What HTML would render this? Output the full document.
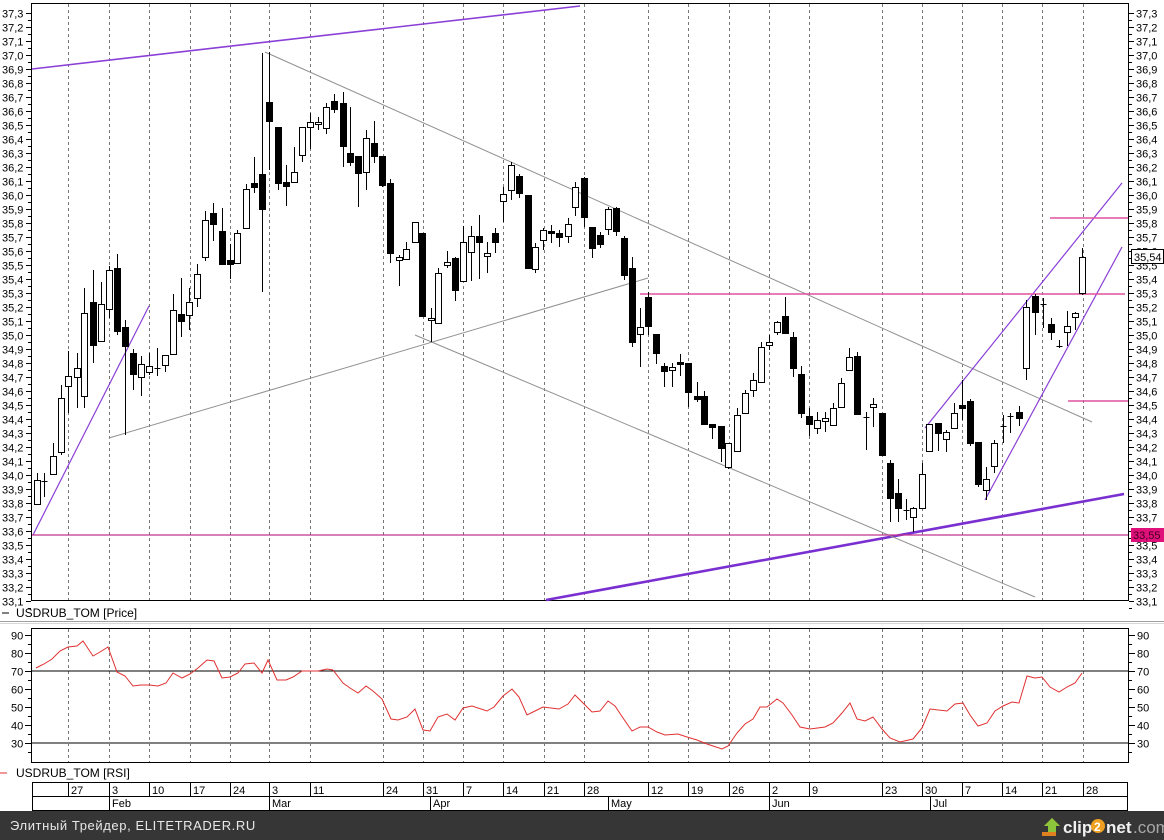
<!DOCTYPE html>
<html><head><meta charset="utf-8"><style>
html,body{margin:0;padding:0;background:#fff;width:1164px;height:840px;overflow:hidden}
svg{display:block}
text{font-family:"Liberation Sans",sans-serif;font-size:11px;fill:#000}
</style></head><body>
<svg id="s" width="1164" height="840" xmlns="http://www.w3.org/2000/svg">
<rect width="1164" height="840" fill="#fff"/>
<g id="grid"></g>
<rect x="31.5" y="3.5" width="1097" height="597" fill="none" stroke="#000"/>
<rect x="31.5" y="628.5" width="1097" height="134" fill="none" stroke="#000"/>
<line x1="32" y1="671" x2="1128" y2="671" stroke="#000"/>
<line x1="32" y1="743" x2="1128" y2="743" stroke="#808080" stroke-width="2"/>
<line x1="0" y1="621.5" x2="1164" y2="621.5" stroke="#a0a0a0"/>
<line x1="0" y1="623.5" x2="1164" y2="623.5" stroke="#d8d8d8"/>
<line x1="32" y1="69" x2="580" y2="6" stroke="#8a3fd6" stroke-width="1.6"/>
<line x1="546" y1="600" x2="1124" y2="494" stroke="#7a2fd0" stroke-width="2.6"/>
<line x1="265" y1="52" x2="1092" y2="422" stroke="#909090"/>
<line x1="415" y1="335" x2="1035" y2="597" stroke="#909090"/>
<line x1="109" y1="438" x2="648" y2="278" stroke="#909090"/>
<line x1="33" y1="535" x2="149" y2="306" stroke="#8a3fd6" stroke-width="1.2"/>
<line x1="925" y1="428" x2="1122" y2="183" stroke="#8a3fd6" stroke-width="1.2"/>
<line x1="985" y1="500" x2="1122" y2="247" stroke="#8a3fd6" stroke-width="1.2"/>
<line x1="32" y1="535" x2="1128" y2="535" stroke="#c0308f" stroke-width="1.2"/>
<line x1="640" y1="294" x2="1125" y2="294" stroke="#e0509f" stroke-width="1.5"/>
<line x1="1050" y1="218" x2="1128" y2="218" stroke="#e0509f" stroke-width="1.5"/>
<line x1="1068" y1="401" x2="1128" y2="401" stroke="#e0509f" stroke-width="1.5"/>
<g id="candles"></g>
<polyline id="rsi" fill="none" stroke="#e03030" stroke-width="1" points=""/>
<g id="axes"></g>
<rect x="1131" y="528" width="33" height="14" fill="#e0107a"/>
<text x="1133" y="539" style="fill:#400020">33,55</text>
<rect x="1131.5" y="249.5" width="32" height="14" fill="#fff" stroke="#000"/>
<text x="1134" y="261">35,54</text>
<line x1="2" y1="613" x2="9" y2="613" stroke="#000"/>
<text x="16" y="617" style="font-size:12px">USDRUB_TOM [Price]</text>
<line x1="0" y1="773" x2="7" y2="773" stroke="#e03030"/>
<text x="16" y="777" style="font-size:12px">USDRUB_TOM [RSI]</text>
<rect x="32.5" y="782.5" width="1095" height="28" fill="#fff" stroke="#000"/>
<line x1="32" y1="796.5" x2="1128" y2="796.5" stroke="#000"/>
<g id="dates"></g>
<rect x="0" y="811" width="1164" height="29" fill="#363636"/>
<text x="10" y="830" style="font-size:13px;fill:#e8e8e8;letter-spacing:0.6px">Элитный Трейдер, ELITETRADER.RU</text>
<g transform="translate(1040,816)">
<polygon points="2,16 8,16 8,10 4,10 12,2 20,10 16,10 16,20 2,20" fill="#e08020"/>
<polygon points="8,16 8,10 4,10 12,2 20,10 16,10 16,16" fill="#8cc43c"/>
</g>
<text x="1063" y="833" style="font-size:17px;fill:#f0f0f0;font-weight:bold">clip</text>
<circle cx="1098" cy="826" r="7" fill="#f0a020"/>
<text x="1094" y="831" style="font-size:12px;fill:#fff;font-weight:bold">2</text>
<text x="1106" y="833" style="font-size:17px;fill:#f0f0f0;font-weight:bold">net</text>
<text x="1133" y="833" style="font-size:17px;fill:#a8a8a8">.com</text>
</svg>
<script>
var NS="http://www.w3.org/2000/svg";
function el(p,t,a,txt){var e=document.createElementNS(NS,t);for(var k in a)e.setAttribute(k,a[k]);if(txt!=null)e.textContent=txt;p.appendChild(e);return e;}
var grid=document.getElementById('grid');
var G=[68,109,149,190,230,269,310,383,423,463,503,544,584,648,688,729,769,809,882,922,962,1002,1042,1083];
G.forEach(function(x){el(grid,'line',{x1:x+.5,y1:4,x2:x+.5,y2:600,stroke:'#777','stroke-dasharray':'3,3'});el(grid,'line',{x1:x+.5,y1:629,x2:x+.5,y2:762,stroke:'#777','stroke-dasharray':'3,3'});});
var ax=document.getElementById('axes');
function y(p){return 13+(37.3-p)*140;}
for(var i=0;i<=42;i++){var p=37.3-i*0.1,yy=Math.round(y(p))+.5;var s=p.toFixed(1).replace('.',',');
el(ax,'line',{x1:26,y1:yy,x2:31,y2:yy,stroke:'#000'});el(ax,'line',{x1:1129,y1:yy,x2:1134,y2:yy,stroke:'#000'});
el(ax,'text',{x:2,y:yy+4},s);el(ax,'text',{x:1136,y:yy+4},s);
el(ax,'line',{x1:28,y1:yy+7,x2:31,y2:yy+7,stroke:'#000'});el(ax,'line',{x1:1129,y1:yy+7,x2:1132,y2:yy+7,stroke:'#000'});}
for(var v=90;v>=30;v-=10){var yy=635+(90-v)*1.8+.5;
el(ax,'line',{x1:25,y1:yy,x2:31,y2:yy,stroke:'#000'});el(ax,'line',{x1:1129,y1:yy,x2:1135,y2:yy,stroke:'#000'});
el(ax,'text',{x:11,y:yy+4},v);el(ax,'text',{x:1137,y:yy+4},v);
el(ax,'line',{x1:28,y1:yy+9,x2:31,y2:yy+9,stroke:'#000'});el(ax,'line',{x1:1129,y1:yy+9,x2:1132,y2:yy+9,stroke:'#000'});}
var C=[[37,480,504,473,504,0],[44,481,481,473,497,0],[53,456,474,443,474,0],[61,398,452,385,455,0],[68,376,386,351,413,0],[77,368,377,353,408,0],[84,313,396,288,408,0],[93,302,345,270,363,1],[101,304,341,282,341,0],[109,270,309,266,318,0],[117,268,331,254,335,1],[125,327,346,320,435,1],[133,353,374,349,390,1],[141,364,377,356,396,0],[149,366,372,353,375,0],[157,368,368,348,376,0],[165,355,365,355,372,0],[173,310,354,294,354,0],[181,314,321,278,337,1],[189,302,315,288,330,0],[197,274,298,264,307,0],[205,220,257,211,261,0],[213,213,224,203,241,1],[222,231,264,208,264,1],[230,260,264,244,279,1],[237,233,263,230,263,0],[246,189,228,184,228,0],[254,183,187,157,193,1],[262,174,209,53,292,1],[269,102,121,52,170,1],[278,127,183,127,190,1],[286,182,186,165,206,1],[294,172,182,147,182,0],[302,127,155,127,162,0],[310,122,127,113,149,0],[318,122,124,117,130,0],[326,107,128,103,134,0],[334,101,109,94,113,1],[343,103,146,92,167,1],[350,153,162,107,166,1],[358,156,173,156,207,1],[366,138,172,130,190,0],[374,143,156,121,163,1],[382,156,185,156,187,1],[390,183,253,179,263,1],[399,257,260,255,286,0],[406,249,259,242,259,0],[415,222,242,222,243,0],[422,233,316,233,316,1],[431,318,320,308,342,0],[438,273,323,268,323,0],[447,262,265,251,268,0],[455,258,290,257,301,1],[463,242,281,226,281,0],[471,236,252,226,281,0],[479,236,242,215,279,1],[487,253,256,242,273,0],[495,233,242,228,253,1],[503,194,201,187,222,0],[511,165,190,162,200,0],[519,176,193,174,198,1],[528,195,268,195,269,1],[535,247,269,243,273,0],[543,230,240,228,250,0],[551,231,233,225,243,1],[559,233,237,230,247,1],[568,224,236,218,243,0],[575,187,207,182,216,0],[584,178,217,177,227,1],[592,227,248,227,258,1],[600,235,244,232,248,1],[608,209,229,207,235,0],[616,208,231,207,236,1],[624,238,275,236,280,1],[632,268,342,257,347,1],[640,327,334,308,367,0],[648,297,326,292,335,1],[656,334,353,334,364,1],[664,366,371,363,387,1],[672,367,370,363,387,0],[680,362,364,354,376,1],[688,363,392,363,407,1],[697,396,399,382,402,1],[704,396,424,391,424,1],[712,424,427,424,439,1],[721,426,448,426,462,1],[728,443,467,443,469,0],[737,415,451,408,451,0],[745,393,413,390,413,0],[753,380,390,373,397,0],[761,347,382,342,382,0],[769,342,345,335,350,0],[777,322,332,321,335,0],[785,316,333,297,333,1],[793,337,368,332,377,1],[801,374,413,366,418,1],[809,416,424,408,436,1],[817,420,428,412,434,0],[825,418,421,412,432,0],[833,408,425,403,425,0],[841,383,407,378,407,0],[849,357,370,348,370,0],[857,356,414,352,414,1],[866,417,417,412,450,0],[873,404,407,398,427,0],[882,413,455,413,455,1],[890,463,498,460,522,1],[898,493,508,479,522,1],[906,510,510,499,520,0],[913,508,517,507,532,0],[922,474,508,463,508,0],[929,424,451,424,451,0],[938,423,433,423,451,1],[946,432,439,430,452,0],[954,413,428,403,428,0],[962,405,408,380,420,1],[970,401,443,399,446,1],[978,442,484,442,487,1],[986,479,490,467,500,0],[994,443,466,440,473,0],[1003,426,426,415,443,0],[1010,416,416,413,433,0],[1019,412,418,406,426,1],[1026,307,368,300,380,0],[1035,296,312,294,335,1],[1043,304,304,298,328,0],[1051,324,332,318,340,1],[1059,346,346,340,348,0],[1067,326,332,311,346,0],[1075,313,317,312,330,0],[1082,257,293,248,295,0]];
var cg=document.getElementById('candles');
C.forEach(function(c){var x=c[0]+.5;el(cg,'line',{x1:x,y1:c[3],x2:x,y2:c[4],stroke:'#000'});
var h=c[2]-c[1];if(h<1){el(cg,'line',{x1:x-3,y1:c[1]+.5,x2:x+3,y2:c[1]+.5,stroke:'#000'});}
else el(cg,'rect',{x:c[0]-2.5,y:c[1]+.5,width:6,height:h,fill:c[5]?'#000':'#fff',stroke:'#000'});});
var R=[[36,668],[44,664],[52,659],[60,651],[68,647],[77,646],[83,641],[93,656],[100,652],[108,647],[117,672],[125,676],[133,686],[141,685],[149,685],[158,686],[166,683],[173,673],[182,678],[190,674],[198,668],[207,660],[214,661],[222,678],[230,677],[238,673],[245,664],[254,663],[262,673],[268,660],[277,680],[286,680],[293,677],[302,671],[318,671],[327,669],[333,670],[343,683],[350,688],[358,693],[366,686],[373,691],[382,699],[391,719],[398,720],[407,717],[415,709],[423,730],[430,731],[438,717],[447,714],[455,720],[463,708],[472,706],[487,711],[494,707],[503,696],[512,689],[519,697],[527,715],[535,711],[543,707],[559,709],[568,704],[575,695],[583,703],[592,712],[600,711],[608,701],[615,706],[623,718],[632,731],[640,727],[648,727],[657,732],[665,735],[678,734],[687,737],[697,740],[707,744],[713,746],[722,749],[728,746],[737,733],[745,724],[753,719],[760,707],[767,707],[777,699],[783,703],[792,715],[800,727],[810,729],[825,727],[833,723],[842,713],[850,703],[857,719],[865,721],[873,717],[882,729],[890,738],[900,742],[913,739],[922,728],[930,709],[947,711],[955,704],[963,703],[970,715],[978,726],[987,723],[995,711],[1003,706],[1012,702],[1019,703],[1027,676],[1035,678],[1042,677],[1050,687],[1059,692],[1067,687],[1075,683],[1082,673]];
document.getElementById('rsi').setAttribute('points',R.map(function(p){return p.join(',')}).join(' '));
var dg=document.getElementById('dates');
var L=['27','3','10','17','24','3','11','24','31','7','14','21','28','12','19','26','2','9','23','30','7','14','21','28'];
G.forEach(function(x,i){el(dg,'line',{x1:x+.5,y1:783,x2:x+.5,y2:796,stroke:'#000'});el(dg,'text',{x:x+3,y:794},L[i]);});
[[109,'Feb'],[269,'Mar'],[430,'Apr'],[608,'May'],[769,'Jun'],[930,'Jul']].forEach(function(m){el(dg,'line',{x1:m[0]+.5,y1:796,x2:m[0]+.5,y2:810,stroke:'#000'});el(dg,'text',{x:m[0]+3,y:807},m[1]);});
</script>
</body></html>
